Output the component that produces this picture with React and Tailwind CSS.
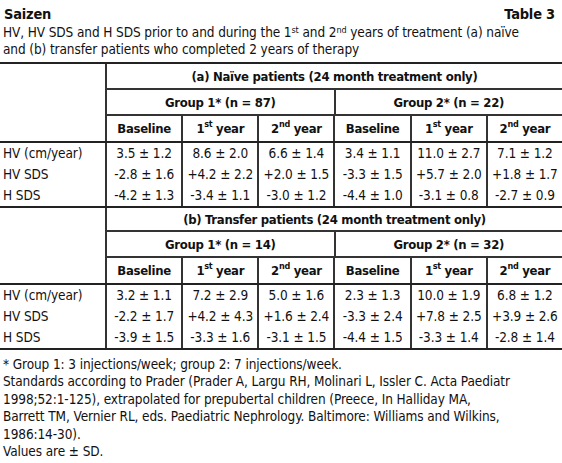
const cols = 'grid grid-cols-[105px_repeat(6,minmax(0,1fr))]';

const sections = [
  {
    title: '(a) Naïve patients (24 month treatment only)',
    groups: ['Group 1* (n = 87)', 'Group 2* (n = 22)'],
    rows: [
      ['HV (cm/year)', '3.5 ± 1.2', '8.6 ± 2.0', '6.6 ± 1.4', '3.4 ± 1.1', '11.0 ± 2.7', '7.1 ± 1.2'],
      ['HV SDS', '-2.8 ± 1.6', '+4.2 ± 2.2', '+2.0 ± 1.5', '-3.3 ± 1.5', '+5.7 ± 2.0', '+1.8 ± 1.7'],
      ['H SDS', '-4.2 ± 1.3', '-3.4 ± 1.1', '-3.0 ± 1.2', '-4.4 ± 1.0', '-3.1 ± 0.8', '-2.7 ± 0.9'],
    ],
  },
  {
    title: '(b) Transfer patients (24 month treatment only)',
    groups: ['Group 1* (n = 14)', 'Group 2* (n = 32)'],
    rows: [
      ['HV (cm/year)', '3.2 ± 1.1', '7.2 ± 2.9', '5.0 ± 1.6', '2.3 ± 1.3', '10.0 ± 1.9', '6.8 ± 1.2'],
      ['HV SDS', '-2.2 ± 1.7', '+4.2 ± 4.3', '+1.6 ± 2.4', '-3.3 ± 2.4', '+7.8 ± 2.5', '+3.9 ± 2.6'],
      ['H SDS', '-3.9 ± 1.5', '-3.3 ± 1.6', '-3.1 ± 1.5', '-4.4 ± 1.5', '-3.3 ± 1.4', '-2.8 ± 1.4'],
    ],
  },
];

function ColHead({ i }) {
  if (i % 3 === 0) return <>Baseline</>;
  if (i % 3 === 1) return <>1<sup className="text-[9px]">st</sup>&nbsp;year</>;
  return <>2<sup className="text-[9px]">nd</sup>&nbsp;year</>;
}

function Section({ s, first }) {
  const head = 'font-bold text-[13px] tracking-[-0.3px]';
  return (
    <div>
      <div className={`${cols} ${first ? 'h-[26px]' : 'h-[24px]'}`}>
        <div />
        <div className={`col-span-6 border-l-2 border-b-2 border-[#333] flex items-center justify-center ${head}`}>
          {s.title}
        </div>
      </div>
      <div className={`${cols} h-[26px]`}>
        <div />
        {s.groups.map((g) => (
          <div key={g} className={`col-span-3 border-l-2 border-b-2 border-[#333] flex items-center justify-center ${head}`}>
            {g}
          </div>
        ))}
      </div>
      <div className={`${cols} h-[27px] border-b-2 border-[#222]`}>
        <div />
        {[0, 1, 2, 3, 4, 5].map((i) => (
          <div key={i} className={`border-l-2 border-[#333] flex items-center justify-center ${head}`}>
            <ColHead i={i} />
          </div>
        ))}
      </div>
      {s.rows.map((r) => (
        <div key={r[0]} className={`${cols} h-[21px]`}>
          <div className="pl-[3px] flex items-center">{r[0]}</div>
          {r.slice(1).map((v, i) => (
            <div key={i} className="border-l-2 border-[#333] flex items-center justify-center whitespace-nowrap">
              {v}
            </div>
          ))}
        </div>
      ))}
    </div>
  );
}

export default function App() {
  return (
    <div className="w-[562px] h-[463px] bg-white text-[#111] text-[13.5px] tracking-[-0.1px] leading-[17px] font-[family-name:'Liberation_Sans_Narrow','Arial_Narrow','DejaVu_Sans_Condensed','Liberation_Sans',sans-serif] overflow-hidden">
      <div className="flex justify-between pt-[5px] pl-[4px] pr-[7px] leading-[19px] font-bold text-[14.5px] tracking-[-0.2px]">
        <span>Saizen</span>
        <span>Table 3</span>
      </div>
      <p className="px-[3px] whitespace-nowrap">
        HV, HV SDS and H SDS prior to and during the 1<sup className="text-[9px]">st</sup> and 2
        <sup className="text-[9px]">nd</sup> years of treatment (a) naïve
        <br />
        and (b) transfer patients who completed 2 years of therapy
      </p>
      <div className="mt-[4px] border-t-2 border-b-2 border-[#222]">
        <Section s={sections[0]} first />
        <div className="border-t-2 border-[#222]">
          <Section s={sections[1]} />
        </div>
      </div>
      <div className="px-[3px] pt-[6px] leading-[17.4px] whitespace-nowrap">
        <p>* Group 1: 3 injections/week; group 2: 7 injections/week.</p>
        <p>
          Standards according to Prader (Prader A, Largu RH, Molinari L, Issler C. Acta Paediatr
          <br />
          1998;52:1-125), extrapolated for prepubertal children (Preece, In Halliday MA,
          <br />
          Barrett TM, Vernier RL, eds. Paediatric Nephrology. Baltimore: Williams and Wilkins,
          <br />
          1986:14-30).
        </p>
        <p>Values are ± SD.</p>
      </div>
    </div>
  );
}
